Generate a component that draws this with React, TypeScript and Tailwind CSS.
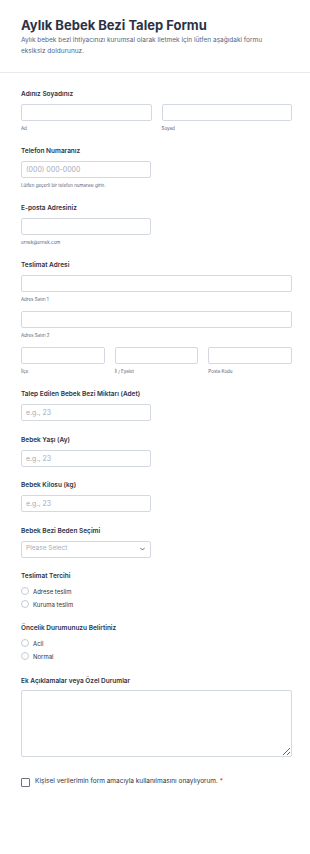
import React from 'react';

const labelCls = 'block text-[6.5px] leading-[10px] font-semibold text-[#2c3345]';
const subCls = 'mt-[3.5px] text-[4.5px] leading-[8px] text-[#57647e]';
const inputCls =
  'block h-[17px] w-full rounded-[2px] border border-[#d3d8e2] bg-white px-[4px] text-[7px] text-[#2c3345] placeholder:text-[#a5abba] outline-none';

const Field: React.FC<{ label: string; children: React.ReactNode; className?: string }> = ({
  label,
  children,
  className,
}) => (
  <div className={className ?? 'mt-[13.5px]'}>
    <span className={labelCls}>{label}</span>
    <div className="mt-[5px]">{children}</div>
  </div>
);

const Radio: React.FC<{ text: string }> = ({ text }) => (
  <label className="flex h-[13px] items-center gap-[4px]">
    <span className="block h-[8px] w-[8px] rounded-full border border-[#c3cad8] bg-white" />
    <span className="text-[6px] text-[#2c3345]">{text}</span>
  </label>
);

export default function App() {
  return (
    <div className="min-h-screen bg-white" style={{ fontFamily: 'Inter, "Noto Sans", sans-serif' }}>
      {/* header */}
      <div className="border-b border-[#e6e8ee] pl-[21px] pr-[18px] pt-[17px] pb-[16px]">
        <h1 className="text-[13px] leading-[16px] font-bold text-[#2c3345]">Aylık Bebek Bezi Talep Formu</h1>
        <p className="mt-[2px] max-w-[255px] text-[6.5px] leading-[10.5px] text-[#57647e]">
          Aylık bebek bezi ihtiyacınızı kurumsal olarak iletmek için lütfen aşağıdaki formu eksiksiz doldurunuz.
        </p>
      </div>

      <form className="pl-[21px] pr-[18px] pt-[16px] pb-[60px]">
        <Field label="Adınız Soyadınız" className="">
          <div className="grid grid-cols-2 gap-[10px]">
            <div>
              <input className={inputCls} />
              <div className={subCls}>Ad</div>
            </div>
            <div>
              <input className={inputCls} />
              <div className={subCls}>Soyad</div>
            </div>
          </div>
        </Field>

        <Field label="Telefon Numaranız">
          <div className="w-[130px]">
            <input className={inputCls} placeholder="(000) 000-0000" />
            <div className={subCls}>Lütfen geçerli bir telefon numarası girin.</div>
          </div>
        </Field>

        <Field label="E-posta Adresiniz">
          <div className="w-[130px]">
            <input className={inputCls} />
            <div className={subCls}>ornek@ornek.com</div>
          </div>
        </Field>

        <Field label="Teslimat Adresi">
          <input className={inputCls} />
          <div className={subCls}>Adres Satırı 1</div>
          <input className={`${inputCls} mt-[7.5px]`} />
          <div className={subCls}>Adres Satırı 2</div>
          <div className="mt-[7.5px] grid grid-cols-3 gap-[10px]">
            <div>
              <input className={inputCls} />
              <div className={subCls}>İlçe</div>
            </div>
            <div>
              <input className={inputCls} />
              <div className={subCls}>İl / Eyalet</div>
            </div>
            <div>
              <input className={inputCls} />
              <div className={subCls}>Posta Kodu</div>
            </div>
          </div>
        </Field>

        <Field label="Talep Edilen Bebek Bezi Miktarı (Adet)">
          <input className={`${inputCls} !w-[130px]`} placeholder="e.g., 23" />
        </Field>

        <Field label="Bebek Yaşı (Ay)">
          <input className={`${inputCls} !w-[130px]`} placeholder="e.g., 23" />
        </Field>

        <Field label="Bebek Kilosu (kg)">
          <input className={`${inputCls} !w-[130px]`} placeholder="e.g., 23" />
        </Field>

        <Field label="Bebek Bezi Beden Seçimi">
          <div className="flex h-[17px] w-[130px] items-center justify-between rounded-[2px] border border-[#d3d8e2] bg-white pl-[4px] pr-[5px]">
            <span className="text-[6.5px] text-[#a5abba]">Please Select</span>
            <svg width="5" height="4" viewBox="0 0 10 6" fill="none">
              <path d="M1 1l4 4 4-4" stroke="#2c3345" strokeWidth="1.4" strokeLinecap="round" strokeLinejoin="round" />
            </svg>
          </div>
        </Field>

        <div className="mt-[13.5px]">
          <span className={labelCls}>Teslimat Tercihi</span>
          <div className="mt-[3.5px]">
            <Radio text="Adrese teslim" />
            <Radio text="Kuruma teslim" />
          </div>
        </div>

        <div className="mt-[12.5px]">
          <span className={labelCls}>Öncelik Durumunuzu Belirtiniz</span>
          <div className="mt-[3.5px]">
            <Radio text="Acil" />
            <Radio text="Normal" />
          </div>
        </div>

        <div className="mt-[13.5px]">
          <span className={labelCls}>Ek Açıklamalar veya Özel Durumlar</span>
          <textarea className="mt-[4px] block h-[67px] w-full resize-y rounded-[2px] border border-[#d3d8e2] bg-white p-[4px] text-[7px] outline-none" />
        </div>

        <label className="mt-[20px] flex h-[10px] items-center gap-[5px]">
          <span className="block h-[9px] w-[9px] rounded-[1px] border border-[#6b7280] bg-white" />
          <span className="text-[6.5px] text-[#2c3345]">
            Kişisel verilerimin form amacıyla kullanılmasını onaylıyorum. <span className="text-[#f23a3c]">*</span>
          </span>
        </label>
      </form>
    </div>
  );
}
